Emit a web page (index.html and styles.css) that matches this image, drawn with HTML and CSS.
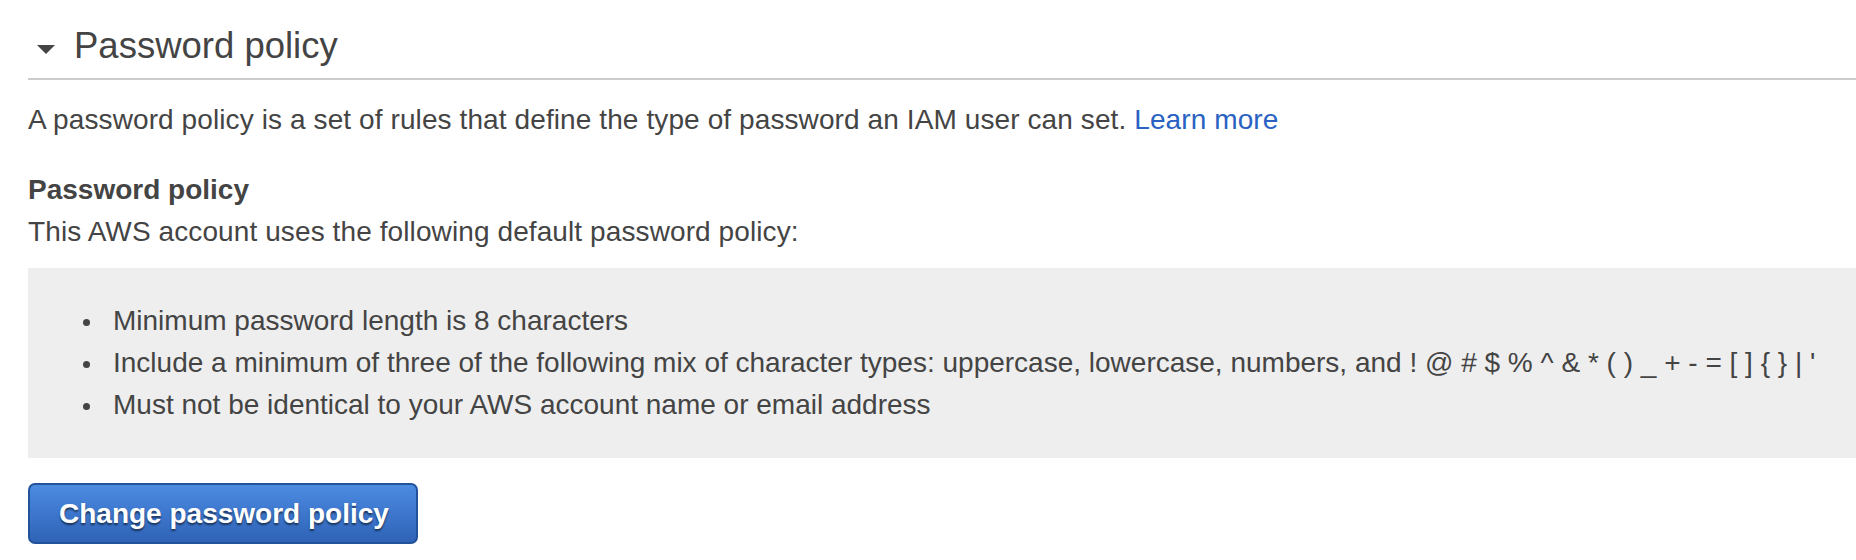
FILE: index.html
```html
<!DOCTYPE html>
<html lang="en">
<head>
<meta charset="utf-8">
<title>Password policy</title>
<link rel="stylesheet" href="styles.css">
</head>
<body>
<section class="panel">
  <header class="panel-header">
    <svg class="caret" width="18" height="9" viewBox="0 0 18 9" aria-hidden="true"><polygon points="0,0 18,0 9,9" fill="#444"/></svg>
    <h2 class="panel-title">Password policy</h2>
  </header>
  <div class="panel-body">
    <p class="intro">A password policy is a set of rules that define the type of password an IAM user can set. <a class="link" href="#">Learn more</a></p>
    <h3 class="sub-title">Password policy</h3>
    <p class="desc">This AWS account uses the following default password policy:</p>
    <div class="policy-box">
      <ul class="policy-list">
        <li>Minimum password length is 8 characters</li>
        <li>Include a minimum of three of the following mix of character types: uppercase, lowercase, numbers, and ! @ # $ % ^ &amp; * ( ) _ + - = [ ] { } | '</li>
        <li>Must not be identical to your AWS account name or email address</li>
      </ul>
    </div>
    <button class="btn-primary" type="button">Change password policy</button>
  </div>
</section>
</body>
</html>
```
FILE: styles.css
```css
html, body {
  margin: 0;
  padding: 0;
  background: #fff;
}
body {
  font-family: "Liberation Sans", Arial, Helvetica, sans-serif;
  color: #444;
  font-size: 28px;
  line-height: 42px;
}
.panel {
  padding: 24px 0 0 28px;
}
.panel-header {
  display: flex;
  align-items: center;
  height: 44px;
  padding-bottom: 10px;
  border-bottom: 2px solid #cccccc;
}
.caret {
  margin-left: 9px;
  margin-right: 19px;
  margin-top: 6px;
  flex: none;
}
.panel-title {
  margin: 0;
  font-size: 36.5px;
  line-height: 44px;
  font-weight: normal;
  color: #444;
}
.panel-body {
  padding-top: 19px;
}
.intro {
  margin: 0;
  letter-spacing: 0.1px;
}
.link {
  color: #2962c2;
  text-decoration: none;
}
.sub-title {
  margin: 28px 0 0;
  font-size: 28px;
  line-height: 42px;
  font-weight: bold;
}
.desc {
  margin: 0;
  letter-spacing: 0.1px;
}
.policy-box {
  margin-top: 15px;
  background: #eeeeee;
  padding: 32px 0 32px;
}
.policy-list {
  margin: 0;
  padding-left: 55px;
  list-style: none;
}
.policy-list li {
  display: flex;
  align-items: center;
}
.policy-list li::before {
  content: "";
  flex: none;
  width: 7px;
  height: 7px;
  border-radius: 50%;
  background: #444;
  margin-right: 23px;
  margin-top: 2px;
}
.btn-primary {
  margin-top: 25px;
  box-sizing: border-box;
  height: 61px;
  padding: 0 27px 0 29px;
  border: 2px solid #22529a;
  border-radius: 7px;
  background: linear-gradient(to bottom, #4b8be0 0%, #3d77cd 50%, #2f63b6 100%);
  color: #fff;
  font-family: "Liberation Sans", Arial, Helvetica, sans-serif;
  font-size: 28px;
  font-weight: bold;
  line-height: 1;
  text-shadow: 0 2px 2px rgba(0, 0, 0, 0.55);
  cursor: pointer;
}
```
